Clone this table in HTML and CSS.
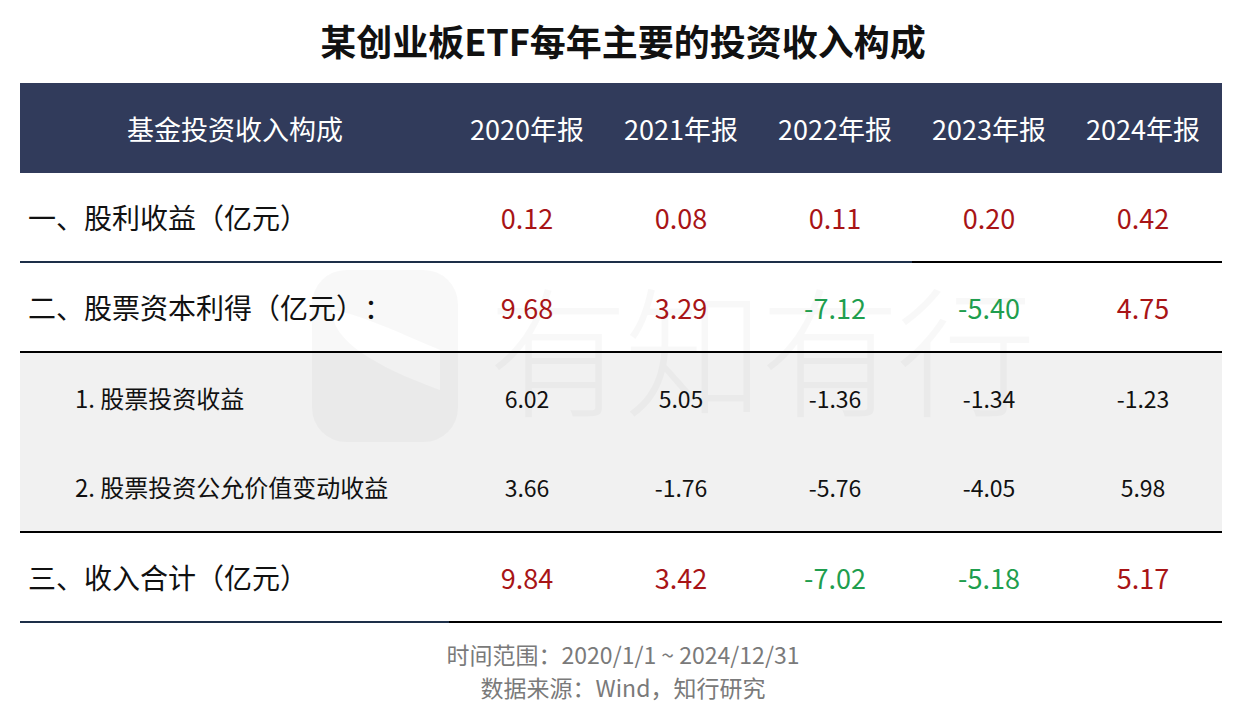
FILE: index.html
```html
<!DOCTYPE html>
<html lang="zh-CN">
<head>
<meta charset="utf-8">
<title>某创业板ETF每年主要的投资收入构成</title>
<link rel="stylesheet" href="styles.css">
</head>
<body>
<div class="page">
  <h1 class="title">某创业板ETF每年主要的投资收入构成</h1>
  <div class="table">
    <div class="row head">
      <div class="cell label-c">基金投资收入构成</div>
      <div class="cell">2020年报</div>
      <div class="cell">2021年报</div>
      <div class="cell">2022年报</div>
      <div class="cell">2023年报</div>
      <div class="cell">2024年报</div>
    </div>
    <div class="row main line-a">
      <div class="cell label">一、股利收益（亿元）</div>
      <div class="cell up">0.12</div>
      <div class="cell up">0.08</div>
      <div class="cell up">0.11</div>
      <div class="cell up">0.20</div>
      <div class="cell up">0.42</div>
    </div>
    <div class="row main line-k">
      <div class="cell label">二、股票资本利得（亿元）：</div>
      <div class="cell up">9.68</div>
      <div class="cell up">3.29</div>
      <div class="cell down">-7.12</div>
      <div class="cell down">-5.40</div>
      <div class="cell up">4.75</div>
    </div>
    <div class="row sub">
      <div class="cell label sublabel">1. 股票投资收益</div>
      <div class="cell">6.02</div>
      <div class="cell">5.05</div>
      <div class="cell">-1.36</div>
      <div class="cell">-1.34</div>
      <div class="cell">-1.23</div>
    </div>
    <div class="row sub line-k">
      <div class="cell label sublabel">2. 股票投资公允价值变动收益</div>
      <div class="cell">3.66</div>
      <div class="cell">-1.76</div>
      <div class="cell">-5.76</div>
      <div class="cell">-4.05</div>
      <div class="cell">5.98</div>
    </div>
    <div class="row main line-b">
      <div class="cell label">三、收入合计（亿元）</div>
      <div class="cell up">9.84</div>
      <div class="cell up">3.42</div>
      <div class="cell down">-7.02</div>
      <div class="cell down">-5.18</div>
      <div class="cell up">5.17</div>
    </div>
    <div class="watermark" aria-hidden="true">
      <svg class="wm-logo" width="146" height="172" viewBox="0 0 146 172">
        <path d="M34 0 H112 A34 34 0 0 1 146 34 V138 A34 34 0 0 1 112 172 H34 A34 34 0 0 1 0 138 V34 A34 34 0 0 1 34 0 Z M20 40 C20 70 60 95 128 120 L128 80 C80 60 50 45 20 40 Z" fill="rgba(0,0,0,0.028)" fill-rule="evenodd"/>
      </svg>
      <span class="wm-text">有知有行</span>
    </div>
  </div>
  <div class="foot">
    <p>时间范围：2020/1/1 ~ 2024/12/31</p>
    <p>数据来源：Wind，知行研究</p>
  </div>
</div>
</body>
</html>
```
FILE: styles.css
```css
* { box-sizing: border-box; }
html, body {
  margin: 0;
  padding: 0;
  background: #ffffff;
}
body {
  font-family: "Noto Sans CJK SC", "Noto Sans", sans-serif;
  color: #111111;
  text-spacing-trim: space-all;
}
.page {
  width: 1246px;
  height: 714px;
  overflow: hidden;
}
.title {
  margin: 0;
  height: 83px;
  line-height: 80px;
  text-align: center;
  font-size: 36px;
  font-weight: 700;
  color: #111111;
}
.table {
  position: relative;
  margin-left: 20px;
  width: 1202px;
}
.row {
  display: grid;
  grid-template-columns: 430px repeat(5, 154px);
  align-items: center;
  height: 90px;
  position: relative;
  z-index: 1;
}
.cell {
  text-align: center;
  font-size: 27px;
  line-height: 1;
}
.head {
  background: #313b5b;
  color: #ffffff;
}
.head .cell { font-size: 27px; font-weight: 400; }
.label {
  text-align: left;
  padding-left: 8px;
}
.main .label { font-size: 28px; }
.label-c { text-align: center; }
.sub {
  background: rgba(236, 236, 236, 0.72);
  z-index: 0;
}
.sub .cell { font-size: 23px; color: #111111; }
.sub .sublabel { font-size: 24px; padding-left: 55px; }
.up { color: #a81416; }
.down { color: #1f9e4e; }
.line-a {
  border-bottom: 2px solid #000;
  border-image: linear-gradient(to right, #1d2f48 0, #1d2f48 74.2%, #000 74.2%, #000 100%) 1;
}
.line-k { border-bottom: 2px solid #000; }
.line-b {
  border-bottom: 2px solid #000;
  border-image: linear-gradient(to right, #1d2f48 0, #1d2f48 35.7%, #000 35.7%, #000 100%) 1;
}
.watermark {
  position: absolute;
  left: 0;
  top: 0;
  width: 100%;
  height: 100%;
  pointer-events: none;
  z-index: 0;
}
.wm-logo {
  position: absolute;
  left: 292px;
  top: 187px;
}
.wm-text {
  position: absolute;
  left: 468px;
  top: 192px;
  font-size: 140px;
  line-height: 1;
  font-weight: 300;
  letter-spacing: -4px;
  color: rgba(0, 0, 0, 0.028);
  white-space: nowrap;
}
.foot {
  text-align: center;
  color: #7a7a7a;
  font-size: 23px;
  padding-top: 15px;
}
.foot p {
  margin: 0;
  line-height: 33px;
}
```
